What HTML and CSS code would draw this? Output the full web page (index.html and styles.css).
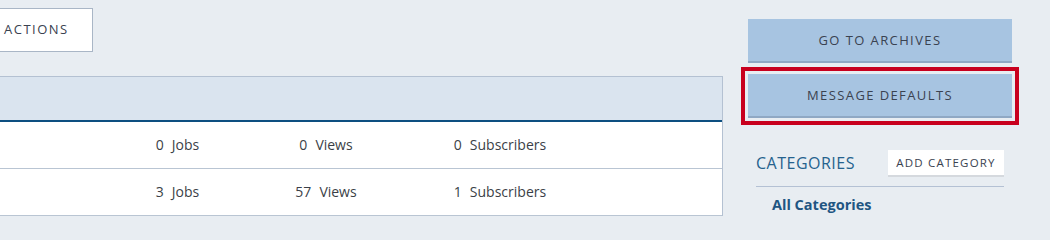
FILE: index.html
```html
<!DOCTYPE html>
<html lang="en">
<head>
<meta charset="utf-8">
<title>Messages</title>
<link rel="stylesheet" href="styles.css">
</head>
<body>
<div class="page">
  <main class="main">
    <div class="toolbar">
      <button class="btn-outline">ACTIONS</button>
    </div>
    <div class="table">
      <div class="table-head"></div>
      <div class="row">
        <span class="cell name"></span>
        <span class="cell"><b>0</b>Jobs</span>
        <span class="cell"><b>0</b>Views</span>
        <span class="cell"><b>0</b>Subscribers</span>
      </div>
      <div class="row">
        <span class="cell name"></span>
        <span class="cell"><b>3</b>Jobs</span>
        <span class="cell"><b>57</b>Views</span>
        <span class="cell"><b>1</b>Subscribers</span>
      </div>
    </div>
  </main>
  <aside class="sidebar">
    <button class="btn-block">GO TO ARCHIVES</button>
    <button class="btn-block focused">MESSAGE DEFAULTS</button>
    <div class="cat-head">
      <h2 class="cat-title">CATEGORIES</h2>
      <button class="btn-small">ADD CATEGORY</button>
    </div>
    <ul class="cat-list">
      <li class="cat-item active">All Categories</li>
    </ul>
  </aside>
</div>
</body>
</html>
```
FILE: styles.css
```css
* { box-sizing: border-box; }
html, body { margin: 0; padding: 0; }
body {
  background: #e8edf2;
  font-family: "Open Sans", "Noto Sans", sans-serif;
  color: #333a44;
  width: 1050px;
  height: 220px;
  overflow: hidden;
}
button { font-family: inherit; cursor: pointer; }
.page {
  display: flex;
  align-items: flex-start;
}
.main {
  width: 773px;
  margin-left: -50px;
  flex: none;
}
.toolbar {
  padding-top: 8px;
  height: 76px;
}
.btn-outline {
  display: block;
  width: 143px;
  height: 44px;
  background: #fff;
  border: 1px solid #a9b6c6;
  padding: 0 0 2px 53px;
  text-align: left;
  font-size: 13px;
  letter-spacing: 1.5px;
  color: #3a4250;
}
.table {
  border: 1px solid #b4c1d2;
  border-bottom: 0;
  background: #fff;
}
.table-head {
  height: 45px;
  background: #dae4ef;
  border-bottom: 2px solid #0d4f80;
}
.row {
  display: grid;
  grid-template-columns: 98px 155px 142px 206px 1fr;
  height: 47px;
  border-bottom: 1px solid #b9c5d3;
  align-items: center;
  padding-left: 51px;
  padding-bottom: 2px;
  font-size: 14px;
  color: #3b3f47;
}
.row .cell { text-align: center; }
.row .cell b { font-weight: 400; margin-right: 8px; }
.sidebar {
  flex: none;
  width: 327px;
  padding: 19px 0 0 25px;
  display: flex;
  flex-direction: column;
  align-items: flex-start;
}
.btn-block {
  width: 264px;
  height: 44px;
  background: #a7c4e1;
  border: 0;
  border-bottom: 2px solid #8fa8c4;
  font-size: 13px;
  letter-spacing: 1.4px;
  color: #3a4250;
  padding: 0;
}
.btn-block + .btn-block { margin-top: 11px; }
.focused {
  outline: 4px solid #c8001e;
  outline-offset: 3px;
}
.cat-head {
  margin-top: 31px;
  width: 248px;
  margin-left: 8px;
  display: flex;
  align-items: center;
  justify-content: space-between;
  height: 38px;
  border-bottom: 1px solid #b4c1d4;
  padding-bottom: 9px;
}
.cat-title {
  margin: 0;
  font-weight: 400;
  font-size: 16px;
  letter-spacing: 0.5px;
  color: #25628e;
}
.btn-small {
  height: 27px;
  width: 116px;
  background: #fff;
  border: 0;
  border-bottom: 2px solid #d5d9de;
  font-size: 11.5px;
  letter-spacing: 1.2px;
  color: #3a4250;
  padding: 0;
}
.cat-list {
  list-style: none;
  margin: 0;
  padding: 8px 0 0 24px;
}
.cat-item {
  font-size: 14.5px;
  font-weight: 700;
  color: #1f5582;
}
```
